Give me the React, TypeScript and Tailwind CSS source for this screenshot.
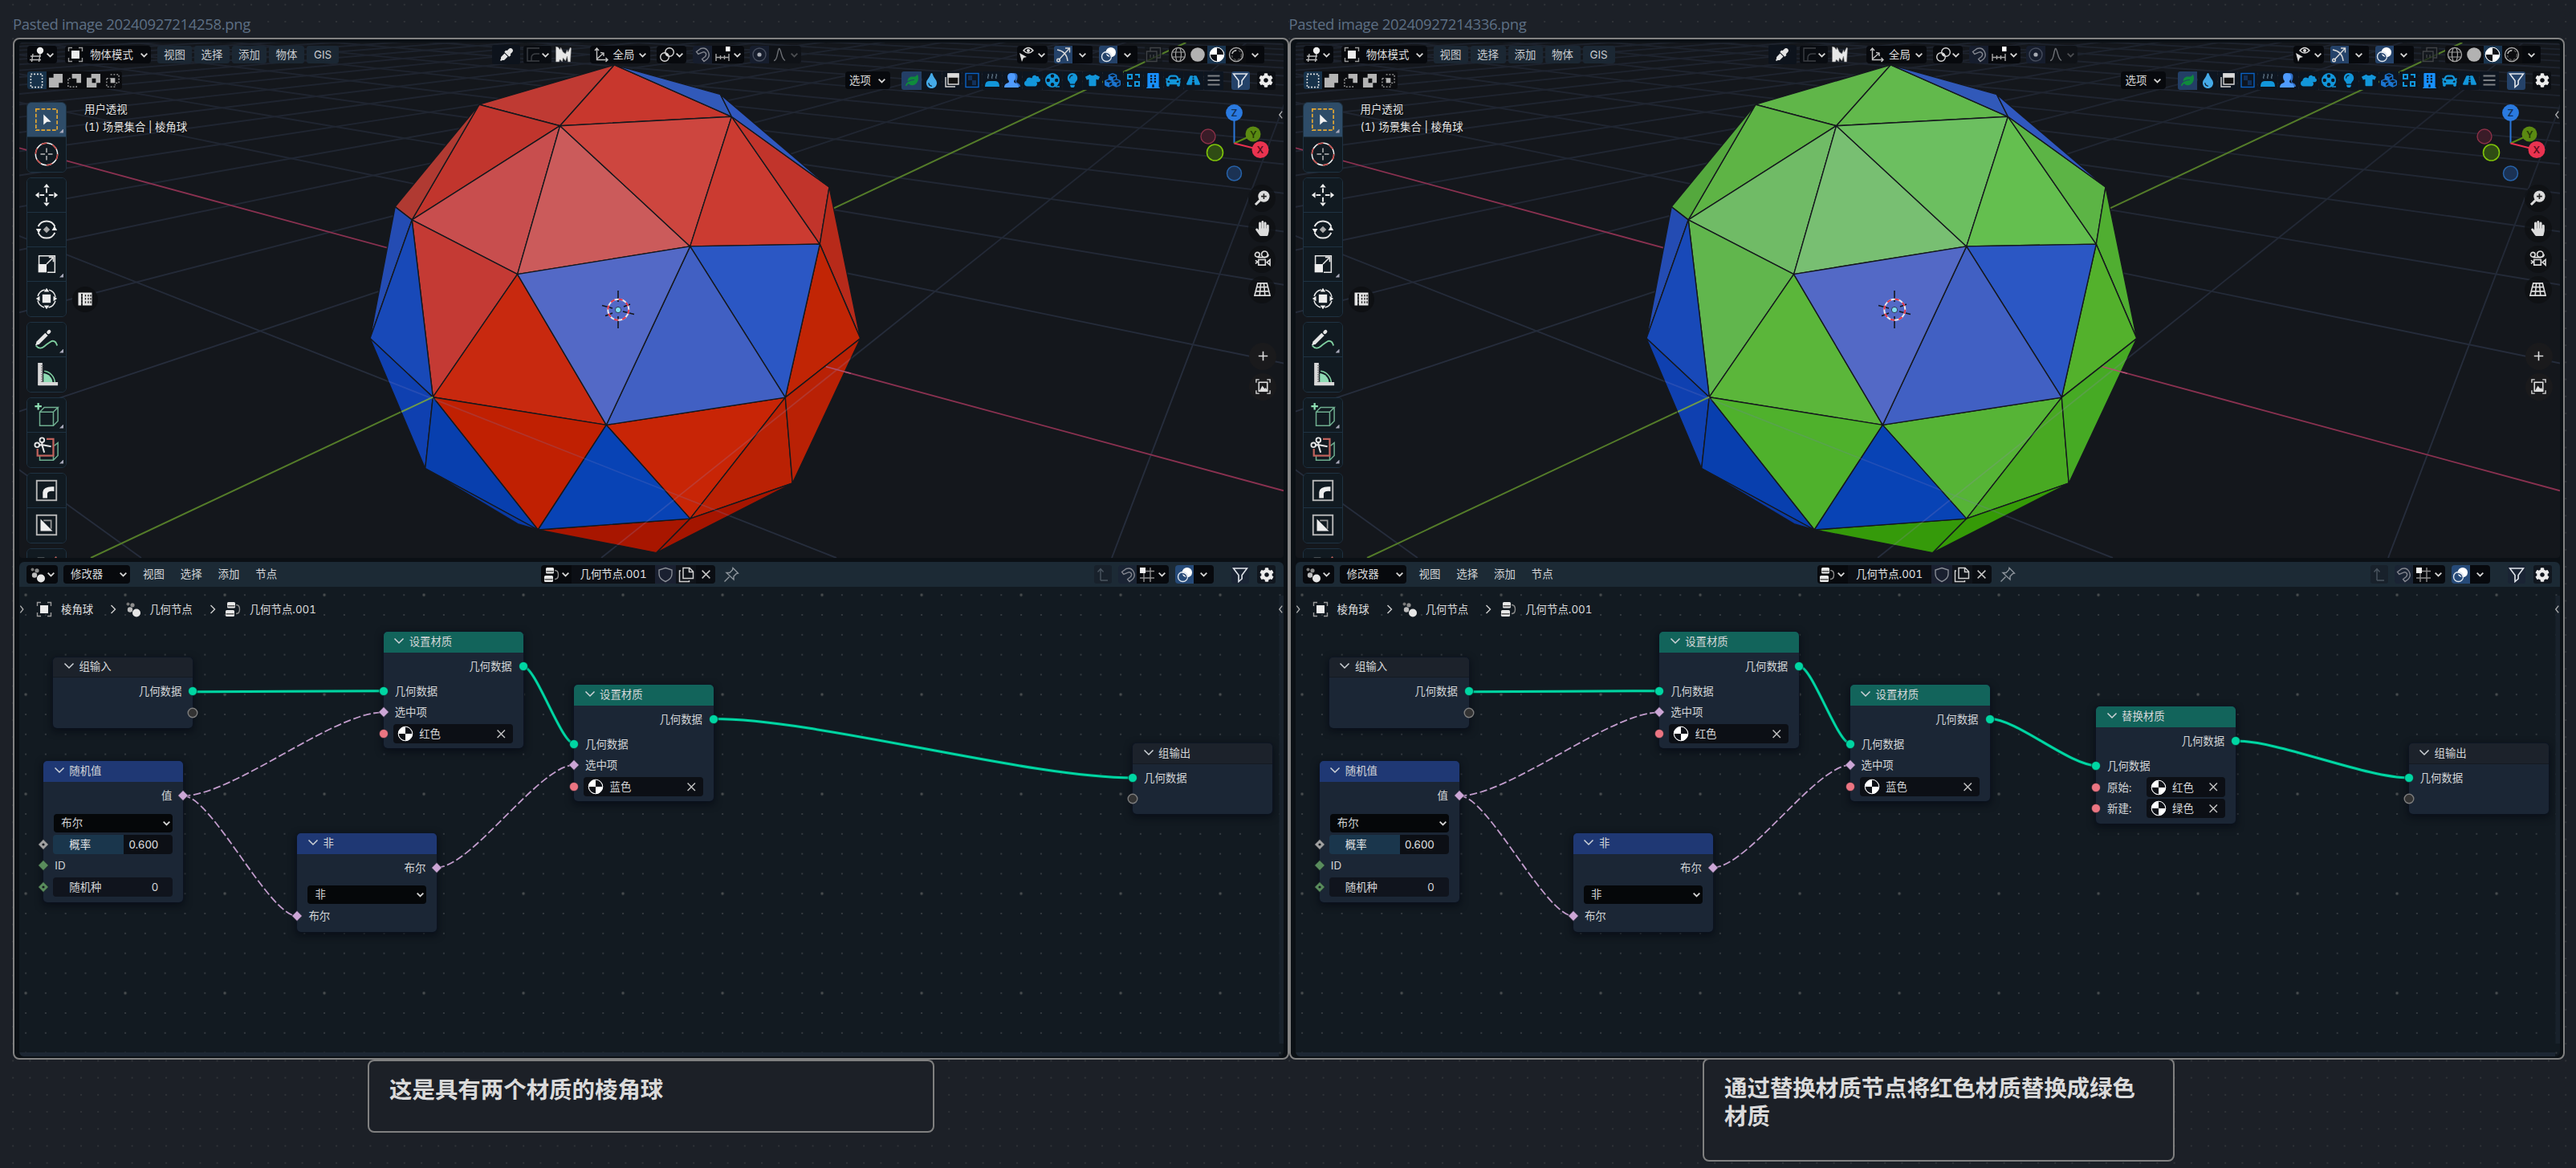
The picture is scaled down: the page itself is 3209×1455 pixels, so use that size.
import React from "react";
import {
  FaBuilding, FaCar, FaCloud, FaCog, FaCubes, FaEyeDropper, FaHandPaper, FaLeaf,
  FaLightbulb, FaRoad, FaTint, FaTshirt,
} from "react-icons/fa";

type Kids = { children?: React.ReactNode };

/* ---------- icons ---------- */

function Ic({ children, c = "size-[20px]" }: Kids & { c?: string }) {
  return (
    <svg viewBox="0 0 20 20" className={"shrink-0 " + c} fill="none" stroke="#d8d8d8" strokeWidth="1.4">
      {children}
    </svg>
  );
}

const Chev = ({ c = "w-[11px] h-[11px]" }: { c?: string }) => (
  <svg viewBox="0 0 10 10" className={"shrink-0 " + c} fill="none" stroke="#d6d6d6" strokeWidth="1.6">
    <path d="M1.500 3.200 5 6.800 8.500 3.200" />
  </svg>
);
const Dots = () => (
  <Ic>
    <g stroke="none" fill="#e6e6e6">
      <circle cx="3.500" cy="3.500" r="2" fill="#777" />
      <circle cx="9" cy="4.800" r="2.600" fill="#8d8d8d" />
      <circle cx="6" cy="10.500" r="3.200" fill="#bcbcbc" />
      <circle cx="14" cy="14.500" r="5" />
    </g>
  </Ic>
);
const ObjectIcon = () => (
  <Ic>
    <path d="M1.500 6V1.500H6M14 1.500h4.500V6M18.500 14v4.500H14M6 18.500H1.500V14" stroke="#9a9a9a" />
    <rect x="5" y="5" width="10" height="10" fill="#ececec" stroke="none" />
  </Ic>
);
const TreeIcon = () => (
  <Ic>
    <rect x="3" y="1" width="10" height="7.500" rx="1.500" fill="#e8e8e8" stroke="none" />
    <rect x="1" y="11" width="11" height="8" rx="1.500" fill="#e8e8e8" stroke="none" />
    <path d="M3.500 5.800h9M1.500 15.800h10" stroke="#555" />
    <path d="M14 4.500q4.500 0 4.500 5.500t-4.500 5.500" stroke="#8a8a8a" />
  </Ic>
);
const MagnetIcon = () => (
  <Ic>
    <path d="M2.500 6.500 8 2.500q6-2 9 3.500t-1 9.500l-4 3-2.400-3 3.900-3q2-2.500.5-4.500t-3.800-.8L4.800 9.500z" stroke="#83868f" />
  </Ic>
);
const OverlayIcon = () => (
  <Ic>
    <circle cx="12.800" cy="7.200" r="6.200" fill="#fff" stroke="none" />
    <circle cx="7.500" cy="12.500" r="6" stroke="#dfe6ee" />
    <path d="M7 8.500q5 1 5 5.500" stroke="#2b4a77" />
  </Ic>
);
const FilterIcon = () => (
  <Ic>
    <path d="M1.500 2h17l-6.400 8.500v4.500L8 18.500v-8z" stroke="#e2e6ec" strokeWidth="1.600" />
  </Ic>
);
const MatIcon = () => (
  <Ic>
    <circle cx="10" cy="10" r="8.800" fill="#fff" stroke="#fff" strokeWidth="1" />
    <path d="M10 1.800a8.200 8.200 0 0 1 8.200 8.200H10zM10 18.200V10H1.800a8.200 8.200 0 0 0 8.200 8.200z" fill="#0d1017" stroke="none" />
  </Ic>
);
const Cross = ({ c = "size-[13px]" }: { c?: string }) => (
  <svg viewBox="0 0 12 12" className={"shrink-0 " + c} stroke="#c4c4c4" strokeWidth="1.4">
    <path d="M1.500 1.500l9 9M10.500 1.500l-9 9" />
  </svg>
);

/* ---------- buttons ---------- */

const Cell = ({ c, children }: Kids & { c: string }) => (
  <div className={"flex shrink-0 items-center justify-center " + c}>{children}</div>
);
const MenuBtn = ({ c, children }: Kids & { c: string }) => (
  <Cell c={"h-[22.500px] rounded-[3px] bg-[#1b2733] text-[#c9ccd0] " + c}>{children}</Cell>
);

/* ---------- 3D scene ---------- */

const V: Record<string, [number, number]> = {
  A: [765.4, 80.8], B: [597, 130.2], C: [697.6, 156.7], D: [911.4, 145.3], E: [897.5, 117.6],
  F: [1033, 233], G: [492.2, 257.6], H: [513.2, 273.9], I: [644.6, 341.6], J: [859.7, 306.9],
  K: [1021.3, 304.1], L: [1071.8, 421.6], M: [461, 421.6], N: [539.3, 494.7], O: [755.3, 529.4],
  P: [978.3, 495.1], Q: [529.7, 583.7], R: [670.2, 660], S: [859.7, 646.1], T: [987.2, 602],
  U: [817.6, 688.6], W: [645, 652.7],
};
const SWAPPABLE: [string, string, string][] = [
  ["ABC", "#bf3a33", "#60b649"], ["ACD", "#c8372d", "#62b94c"], ["BCH", "#c1352d", "#5eb445"],
  ["BHG", "#b03a32", "#54a83d"], ["CHI", "#c84e4e", "#70bb66"], ["CIJ", "#cb5b5b", "#78bf72"],
  ["CDJ", "#cd463f", "#6cbf60"], ["DJK", "#cb3b31", "#64bf4f"], ["DFK", "#c1342b", "#5cb445"],
  ["FKL", "#b72a1a", "#50ae31"], ["KLP", "#c12505", "#53b12c"], ["HIN", "#c43a34", "#61b64d"],
  ["INO", "#c8290f", "#5bb63a"], ["NOR", "#c02002", "#4fb12c"], ["OSP", "#c82506", "#56b436"],
  ["PST", "#ba2104", "#48a922"], ["PLT", "#b92105", "#46aa24"], ["STU", "#a51500", "#359a07"],
  ["RSU", "#a81600", "#359a0a"],
];
const BLUE: [string, string][] = [
  ["AED", "#3159b9"], ["EFD", "#3058bf"], ["JKP", "#2b57c4"], ["JOP", "#4160c3"], ["IJO", "#5369c6"],
  ["GHM", "#244cb3"], ["HMN", "#1849b8"], ["MNQ", "#0f40b0"], ["NQR", "#083fae"], ["QWR", "#0a3aa4"],
  ["ORS", "#0843b5"],
];
const pts = (f: string) => f.split("").map((k) => V[k].join(",")).join(" ");
const OUTLINE = "AEFLTURWQMGB";

/* floor lines run to one of two vanishing points and cross y=695 at equal steps */
const floorA = Array.from({ length: 24 }, (_, i) => i - 1).filter((k) => k !== 1);
const floorB = Array.from({ length: 26 }, (_, i) => 2 - i).filter((k) => k !== 0);

function Scene({ green }: { green: boolean }) {
  const id = green ? "g" : "r";
  return (
    <svg viewBox="24 53 1575 642" className="absolute inset-0 h-[642px] w-[1575px]">
      <defs>
        <linearGradient id={"fade" + id} x1="0" y1="53" x2="0" y2="450" gradientUnits="userSpaceOnUse">
          <stop offset="0" stopColor="#fff" stopOpacity=".55" />
          <stop offset="1" stopColor="#fff" />
        </linearGradient>
        <mask id={"m" + id} maskUnits="userSpaceOnUse" x="24" y="53" width="1575" height="642">
          <rect x="24" y="53" width="1575" height="642" fill={`url(#fade${id})`} />
        </mask>
        <clipPath id={"ball" + id}><polygon points={pts(OUTLINE)} /></clipPath>
      </defs>
      <rect x="24" y="53" width="1575" height="642" fill="#14171c" />
      <g mask={`url(#m${id})`} stroke="#262d3c" strokeWidth="1.900">
        {floorA.map((k) => <line key={"a" + k} x1="-865" y1="-56" x2={1042 + 866 * k} y2="695" />)}
        {floorB.map((k) => <line key={"b" + k} x1="1662" y1="-34" x2={749 + 636 * (k - 1)} y2="695" />)}
      </g>
      <line x1="24" y1="184.400" x2="1599" y2="611.300" stroke="#8a3150" strokeWidth="1.800" />
      <line x1="113" y1="695" x2="1477.300" y2="53" stroke="#547c29" strokeWidth="2" />

      <g stroke="#15181d" strokeWidth="1.400" strokeLinejoin="round">
        {SWAPPABLE.map(([f, r, g]) => <polygon key={f} points={pts(f)} fill={green ? g : r} />)}
        {BLUE.map(([f, c]) => <polygon key={f} points={pts(f)} fill={c} />)}
      </g>
      <g clipPath={`url(#ball${id})`} strokeWidth="1.800" opacity=".22">
        <path d="M440 457.700 539 496.700 1042 695" stroke="#7a7ac0" />
        <path d="M749 695 1072 437" stroke="#9a86c0" />
      </g>
      <path d="M500 513 539.300 494.700" stroke="#6f9a4a" strokeWidth="2" />
      <path d="M1029 456.800 1060 465.200" stroke="#b05070" strokeWidth="1.500" />

      <path d="M770 362v14M770 394v15M750 380.500l13 3.500M776 388l14 3.500M754 393.500l9-3.500M777 382l8-3" stroke="#14171c" strokeWidth="1.600" />
      <circle cx="770.300" cy="385.800" r="13" fill="none" stroke="#e9e9f0" strokeWidth="2" />
      <circle cx="770.300" cy="385.800" r="13" fill="none" stroke="#e0344c" strokeWidth="2" strokeDasharray="5.100 5.100" />
      <circle cx="770" cy="386" r="3.600" fill="#7fdcf2" stroke="#223" strokeWidth=".8" />
    </svg>
  );
}

/* ---------- viewport headers ---------- */

function TopBar() {
  return (
    <div className="flex h-[23px] items-center text-[13.400px] text-[#dcdcdc]">
      <Cell c="ml-[10px] h-[22.500px] w-[37px] rounded-[4px] bg-[#07090d]">
        <Ic>
          <path d="M4 9 2.500 19M13 9l-1.500 10M1 12h13M0 16.500h14" stroke="#bcbcbc" />
          <circle cx="13" cy="5" r="4.200" fill="#eee" stroke="none" />
        </Ic>
        <Chev />
      </Cell>
      <Cell c="ml-[10px] h-[22.500px] w-[107px] gap-[8px] rounded-[4px] bg-[#07090d]">
        <ObjectIcon />
        <span>物体模式</span>
        <Chev />
      </Cell>
      <MenuBtn c="ml-[8px] w-[43px]">视图</MenuBtn>
      <MenuBtn c="ml-[3px] w-[44px]">选择</MenuBtn>
      <MenuBtn c="ml-[3px] w-[43px]">添加</MenuBtn>
      <MenuBtn c="ml-[3px] w-[44px]">物体</MenuBtn>
      <MenuBtn c="ml-[3px] w-[40px]">GIS</MenuBtn>

      <Cell c="ml-[191px] h-[24px] w-[35px] rounded-[3px] bg-[#0d131c]"><FaEyeDropper className="size-[16px] text-[#e4e4e4]" /></Cell>
      <Cell c="ml-[4px] h-[22.500px] w-[35px] rounded-[3px] bg-[#090c11]">
        <Ic><path d="M18 2H3v16h15M8 18v-4q0-5 6-5h4" stroke="#3c3f44" /></Ic>
        <Chev />
      </Cell>
      <Cell c="ml-[3px] h-[21px] w-[23px]">
        <Ic c="h-[20px] w-[21px]"><path d="M1 0 4 1l2 3 1-3 3 6 3 2 2-5 1 3 3-6 1 1-1 17h-3l-1-7-2 6-3-4-1 5-3-3-1 3H1z" fill="#e8e8e8" stroke="#888" strokeWidth=".6" /></Ic>
      </Cell>
      <Cell c="ml-[22px] h-[22.500px] w-[75px] gap-[5px] rounded-[4px] bg-[#07090d]">
        <Ic><path d="M4.500 2v14.500H18M4.500 15.500l8-7M2 5l2.500-3L7 5M15.500 14l2.500 2.500-2.500 2.500M9 7.500l4 .5v4" stroke="#c4c4c4" /></Ic>
        <span>全局</span>
        <Chev />
      </Cell>
      <Cell c="ml-[8px] h-[22.500px] w-[37px] rounded-[4px] bg-[#07090d]">
        <Ic>
          <circle cx="7" cy="13" r="5.300" /><circle cx="13" cy="7" r="5.300" /><circle cx="10" cy="10" r="1.500" fill="#ddd" stroke="none" />
        </Ic>
        <Chev />
      </Cell>
      <Cell c="ml-[8px] h-[22.500px] w-[24px] rounded-l-[4px] bg-[#161d2d]"><MagnetIcon /></Cell>
      <Cell c="h-[22.500px] w-[40px] gap-[3px] rounded-r-[4px] bg-[#07090d]">
        <Ic><path d="M2 9v9M7.500 11v5M12.500 11v5M18 9v9M2 13.500h16" stroke="#a8a8a8" /><rect x="14" y="0" width="5.500" height="6" fill="#fff" stroke="none" /></Ic>
        <Chev />
      </Cell>
      <Cell c="ml-[7px] h-[22.500px] w-[24px] rounded-l-[4px] bg-[#161d2d]">
        <Ic><circle cx="10" cy="10" r="8" stroke="#454c5c" /><circle cx="10" cy="10" r="2.600" fill="#a8acb4" stroke="none" /></Ic>
      </Cell>
      <Cell c="h-[22.500px] w-[40px] gap-[3px] rounded-r-[4px] bg-[#0f1217]">
        <Ic><path d="M3 17.500q3 0 4.500-8T10 2.500t2.500 7 4.500 8" stroke="#6a6d72" /></Ic>
        <span className="opacity-30"><Chev /></span>
      </Cell>

      <Cell c="ml-[269px] h-[22.500px] w-[38px] gap-[3px] rounded-[4px] bg-[#07090d]">
        <Ic>
          <path d="M6 5q6-7 12 0-6 6-12 0z" /><circle cx="12" cy="5" r="2" fill="#ddd" stroke="none" />
          <path d="M1 8l9 5-4 1-2 5z" fill="#ddd" stroke="none" />
        </Ic>
        <Chev />
      </Cell>
      <Cell c="ml-[8px] h-[22.500px] w-[23px] rounded-l-[3px] bg-[#244269]">
        <Ic><path d="M2 4q12 2 13 14M4 16.500 17 2.500M12 2h5.500v5.500" /><circle cx="3.500" cy="17" r="1.800" /></Ic>
      </Cell>
      <Cell c="h-[22.500px] w-[25px] rounded-r-[3px] bg-[#07090d]"><Chev /></Cell>
      <Cell c="ml-[8px] h-[22.500px] w-[23px] rounded-l-[3px] bg-[#244269]"><OverlayIcon /></Cell>
      <Cell c="h-[22.500px] w-[25px] rounded-r-[3px] bg-[#07090d]"><Chev /></Cell>
      <Cell c="ml-[9px] h-[22.500px] w-[22px] rounded-[3px] bg-[#11151a]/70">
        <Ic><path d="M6 6V1.500h12.500V14H14M1.500 6H14v12.500H1.500zM6 10v4M10 10v4" stroke="#3f4246" /></Ic>
      </Cell>
      <Cell c="ml-[8px] h-[22.500px] w-[24px] rounded-l-[3px] bg-[#0b0c0f]">
        <Ic><circle cx="10" cy="10" r="8.500" stroke="#a0a0a0" /><path d="M2 7h16M2 13h16M8 2q-3 8 0 16M12 2q3 8 0 16" stroke="#a0a0a0" strokeWidth="1.200" /></Ic>
      </Cell>
      <Cell c="h-[22.500px] w-[24px] bg-[#0b0c0f]"><Ic><circle cx="10" cy="10" r="8.800" fill="#b2b2b2" stroke="none" /></Ic></Cell>
      <Cell c="h-[22.500px] w-[23px] bg-[#193550]"><MatIcon /></Cell>
      <Cell c="h-[22.500px] w-[25px] bg-[#0b0c0f]">
        <Ic><circle cx="10" cy="10" r="8.500" stroke="#a8a8a8" /><circle cx="10.500" cy="10.500" r="6" stroke="#555" strokeDasharray="3 2" /><path d="M5 9q1-4 5-4" stroke="#bbb" /></Ic>
      </Cell>
      <Cell c="h-[22.500px] w-[23px] rounded-r-[3px] bg-[#07090d]"><Chev /></Cell>
    </div>
  );
}

const Tool5 = ({ children, on }: Kids & { on?: boolean }) => (
  <Cell c={"h-[22px] w-[23.600px] " + (on ? "bg-[#17324a]" : "bg-[#0b0c0f]")}><Ic c="size-[19px]">{children}</Ic></Cell>
);

const AddonCell = ({ children, on }: Kids & { on?: boolean }) => (
  <Cell c={"mr-px h-[23px] w-[24.100px] " + (on ? "bg-[#233f66]" : "bg-[#0d1520]")}>{children}</Cell>
);

function SecondBar() {
  return (
    <div className="mt-[9px] flex h-[23px] items-center text-[13.400px] text-[#dcdcdc]">
      <div className="ml-[10px] flex overflow-hidden rounded-[3px]">
        <Tool5 on><rect x="2.500" y="1.500" width="15" height="17" strokeDasharray="2 2" stroke="#e8e8e8" strokeWidth="1.700" /></Tool5>
        <Tool5><path d="M7 1h12v12h-5v6H1V6h6z" fill="#b4b4b4" stroke="none" /></Tool5>
        <Tool5><path d="M7 1h12v12h-6V7H7z" fill="#b4b4b4" stroke="none" /><path d="M5 7H2v11h11v-3" strokeDasharray="2 2" stroke="#b4b4b4" /></Tool5>
        <Tool5><path d="M7 1h12v12h-5v6H1V6h6zM8 7v6h5V7z" fill="#b4b4b4" fillRule="evenodd" stroke="none" /></Tool5>
        <Tool5><path d="M7 2h11v11h-5M2 7h5M2 7v11h11v-3" strokeDasharray="2 2" stroke="#a4a4a4" /><rect x="7" y="6.500" width="6" height="6.500" fill="#b4b4b4" stroke="none" /></Tool5>
      </div>
      <Cell c="ml-[901px] h-[22.500px] w-[56px] gap-[8px] rounded-[4px] bg-[#07090d]"><span>选项</span><Chev /></Cell>
      <div className="ml-[14.500px] flex overflow-hidden rounded-[3px]">
        <AddonCell on><FaLeaf className="size-[16px] text-[#0f8a3c]" /></AddonCell>
        <AddonCell><FaTint className="h-[19px] w-[17px] text-[#45aae8]" /></AddonCell>
        <AddonCell><Ic><path d="M5 2h13v13H5z" fill="#111" /><path d="M5 2h13v4H5z" fill="#ddd" /><path d="M2 6v12h12" /></Ic></AddonCell>
        <AddonCell><Ic><rect x="2" y="1.500" width="16" height="17" stroke="#0b62c4" /><path d="M5 4h5v6h5v6h-5v-6H5z" fill="#12305a" stroke="none" /></Ic></AddonCell>
        <AddonCell><Ic><path d="M1 18q0-7 5-7h8q5 0 5 7z" fill="#1296db" stroke="none" /><path d="M5 8q-1-2 0-3t0-3M10 8q-1-2 0-3t0-3M15 8q-1-2 0-3t0-3" stroke="#5b6f80" /></Ic></AddonCell>
        <AddonCell>
          <Ic>
            <path d="M11 1q6-.5 5.500 5 0 3-1.500 5 0 2 2 2.500 3 1 3 4.500h-4z" fill="#2f6fc8" stroke="none" />
            <path d="M9 1q5 0 5 5 0 3-2 5 0 2 2 2.500 4 1 4 5.500H0q0-4.500 4-5.500 2-.5 2-2.500-2-2-2-5 0-5 5-5z" fill="#4f9bff" stroke="none" />
          </Ic>
        </AddonCell>
        <AddonCell>
          <span className="relative flex h-[20px] w-[20px] items-end">
            <FaCloud className="size-[16px] text-[#1296db]" />
            <FaCloud className="absolute top-[2px] right-0 size-[12px] text-[#1296db]" />
          </span>
        </AddonCell>
        <AddonCell>
          <Ic>
            <circle cx="10" cy="10" r="9" fill="#1296db" stroke="none" />
            <g fill="#0d1520" stroke="none">
              <circle cx="10" cy="4.800" r="2.200" /><circle cx="10" cy="15.200" r="2.200" /><circle cx="4.800" cy="10" r="2.200" /><circle cx="15.200" cy="10" r="2.200" />
            </g>
            <path d="M14 18h5" stroke="#1296db" />
          </Ic>
        </AddonCell>
        <AddonCell><FaLightbulb className="size-[18px] text-[#1296db]" /></AddonCell>
        <AddonCell><FaTshirt className="size-[18px] text-[#1296db]" /></AddonCell>
        <AddonCell><FaCubes className="size-[20px] text-[#1a74cf]" /></AddonCell>
        <AddonCell><Ic><path d="M3 3h5v5H3zM12 12h5v5h-5zM12 3h5v4M3 12v5h5" stroke="#1296db" strokeWidth="2" /></Ic></AddonCell>
        <AddonCell><FaBuilding className="size-[19px] text-[#1890ff]" /></AddonCell>
        <AddonCell><FaCar className="size-[19px] text-[#1296db]" /></AddonCell>
        <AddonCell><FaRoad className="h-[16px] w-[17px] text-[#1296db]" /></AddonCell>
        <AddonCell><Ic><path d="M2.500 4.500h15M2.500 10h15M2.500 15.500h15" stroke="#7d8084" strokeWidth="1.800" /></Ic></AddonCell>
      </div>
      <Cell c="ml-[9px] h-[23px] w-[23px] rounded-[3px] bg-[#244269]"><FilterIcon /></Cell>
      <Cell c="ml-[9px] h-[23px] w-[23px] rounded-[3px] bg-[#0b0e13]"><FaCog className="size-[18px] text-[#ececec]" /></Cell>
    </div>
  );
}

/* ---------- viewport tool shelf ---------- */

const Tool = ({ children, on, tri, last }: Kids & { on?: boolean; tri?: boolean; last?: boolean }) => (
  <div className={"relative flex h-[43px] items-center justify-center " + (on ? "bg-[#2e4c68] " : "bg-[#111a21] ") + (last ? "" : "border-b border-[#1e3242]")}>
    <svg viewBox="0 0 34 34" className="size-[32px]" fill="none" stroke="#e6e6e6" strokeWidth="1.600">{children}</svg>
    {tri && <div className="absolute right-[3px] bottom-[4px] size-[5px] bg-[#aab] [clip-path:polygon(100%_0,100%_100%,0_100%)]" />}
  </div>
);
const Group = ({ children }: Kids) => (
  <div className="mb-[6px] shrink-0 overflow-hidden rounded-[6px] border border-[#1e3242]">{children}</div>
);

function Shelf() {
  return (
    <div className="ml-[9px] flex w-[50px] flex-col">
      <Group>
        <Tool on tri>
          <rect x="3" y="3" width="28" height="28" stroke="#e5a832" strokeWidth="1.800" strokeDasharray="5 2.200" />
          <path d="M13 10l10 10h-5.500L13 24z" fill="#f2f2f2" stroke="none" />
        </Tool>
        <Tool last>
          <circle cx="17" cy="17" r="14.500" stroke="#f0f0f0" />
          <circle cx="17" cy="17" r="14.500" stroke="#c2403e" strokeDasharray="7.600 7.600" />
          <path d="M17 9v6M17 19v6M9 17h6M19 17h6" stroke="#b8b8b8" />
        </Tool>
      </Group>
      <Group>
        <Tool>
          <path d="M17 8v6M17 20v6M8 17h6M20 17h6" strokeWidth="2.200" />
          <path d="M17 2l4 5h-8zM17 32l4-5h-8zM2 17l5-4v8zM32 17l-5-4v8z" fill="#eee" stroke="none" />
        </Tool>
        <Tool>
          <path d="M6 13a12 12 0 0 1 22 0M28 21a12 12 0 0 1-22 0" strokeWidth="2" />
          <path d="M3 16h7l-3.500 6zM24 18h7l-3.500-6z" fill="#eee" stroke="none" />
          <path d="M17 12.500l4.500 4.500-4.500 4.500-4.500-4.500z" fill="#aaa" stroke="none" />
        </Tool>
        <Tool tri>
          <path d="M7 17V6h21v22H18M17 17l8-8M20 8h6v6" />
          <rect x="6" y="17" width="11" height="11" fill="#eee" stroke="none" />
        </Tool>
        <Tool last>
          <circle cx="17" cy="17" r="12" strokeDasharray="13 5.850" strokeDashoffset="-3" />
          <rect x="11.500" y="11.500" width="11" height="11" fill="#eee" stroke="none" />
          <path d="M17 3l3.500 5h-7zM17 31l3.500-5h-7zM3 17l5-3.500v7zM31 17l-5-3.500v7z" fill="#eee" stroke="none" />
        </Tool>
      </Group>
      <Group>
        <Tool tri>
          <path d="M3 25q5 6 11 1t10-7q5-1 7 6" stroke="#7fcfa0" strokeWidth="2" />
          <path d="M5 22 17 10" strokeWidth="5" /><path d="M19.500 7.500l1-1" strokeWidth="4.500" strokeLinecap="round" />
          <path d="M2 25l2-5 3 3z" fill="#eee" stroke="none" />
        </Tool>
        <Tool last>
          <path d="M13 29V16a13 13 0 0 1 12 13z" fill="#8fdcb4" stroke="none" />
          <path d="M14 13a16 16 0 0 1 14 15" stroke="#7fcfa0" />
          <path d="M8.500 2v30" strokeWidth="6" stroke="#d8d8d8" /><path d="M6 30h26" strokeWidth="4.500" stroke="#d8d8d8" />
          <path d="M11 5v23" strokeWidth="2.500" stroke="#777" strokeDasharray="1.500 1.500" />
        </Tool>
      </Group>
      <Group>
        <Tool tri>
          <path d="M8 13h18v18H8zM8 13l6-6h18l-6 6M32 7v18l-6 6" stroke="#6fae90" />
          <path d="M6 1v9M1.500 5.500h9" stroke="#8fe0b4" strokeWidth="2.400" />
        </Tool>
        <Tool tri last>
          <path d="M8 25v6h18v-6M26 31l6-6V8l-5 4" stroke="#6fae90" />
          <path d="M17 3h9v22H5v-9" stroke="#c0625c" strokeWidth="2.400" />
          <circle cx="11" cy="4.500" r="3" strokeWidth="2" /><circle cx="4.500" cy="11" r="3" strokeWidth="2" />
          <path d="M11 7v4l3 10M7 11h5l11 2" strokeWidth="2.200" />
        </Tool>
      </Group>
      <Group>
        <Tool>
          <rect x="4" y="4" width="26" height="26" stroke="#b8b8b8" strokeWidth="2" />
          <path d="M12 27v-8q1-8 15-7v6q-8-1-9 3v6z" fill="#eee" stroke="none" />
        </Tool>
        <Tool last>
          <rect x="4" y="4" width="26" height="26" stroke="#b8b8b8" strokeWidth="2" />
          <path d="M9 9l16 16H9z" fill="#eee" stroke="none" /><path d="M13 11h10v11" stroke="#999" strokeWidth="1.800" />
        </Tool>
      </Group>
      <Group>
        <Tool><path d="M5 6h9l4 4v10H5z" fill="#eee" stroke="none" /><path d="M24 12l6-7" stroke="#c0625c" strokeWidth="2" /></Tool>
      </Group>
    </div>
  );
}

/* ---------- viewport right side ---------- */

const NavBtn = ({ children, c = "bg-[#0e1013]/80" }: Kids & { c?: string }) => (
  <div className={"flex size-[34px] items-center justify-center rounded-full " + c}>
    <svg viewBox="0 0 22 22" className="size-[21px]" fill="none" stroke="#dcdcdc" strokeWidth="1.700">{children}</svg>
  </div>
);

function RightSide() {
  return (
    <div className="ml-auto flex flex-col">
      <div className="flex">
        <svg viewBox="1491 127.500 95 102" className="h-[102px] w-[95px]" fontFamily="Inter" fontSize="12" fontWeight="600" textAnchor="middle">
          <path d="M1537.500 179V148" stroke="#2a76d8" strokeWidth="2" />
          <path d="M1537.500 179l20-9" stroke="#5b8a12" strokeWidth="2" />
          <path d="M1537.500 179l28 7" stroke="#e8304f" strokeWidth="2" />
          <circle cx="1505" cy="170.500" r="9" fill="#3a1c28" stroke="#8b3047" strokeWidth="1.400" />
          <circle cx="1513.500" cy="190.500" r="10" fill="#2f4c14" stroke="#7fc20a" strokeWidth="1.600" />
          <circle cx="1537.500" cy="216.500" r="9" fill="#1b3254" stroke="#2762a8" strokeWidth="1.500" />
          <circle cx="1537.500" cy="141" r="10.400" fill="#2a7ae0" />
          <circle cx="1561" cy="167.500" r="9.500" fill="#5b8a12" />
          <circle cx="1570" cy="187" r="10.500" fill="#ea3350" />
          <text x="1537.500" y="145.500" fill="#10305a">Z</text>
          <text x="1561.300" y="172" fill="#243a06">Y</text>
          <text x="1569.800" y="191.500" fill="#5d0d1b">X</text>
        </svg>
        <svg viewBox="0 0 8 12" className="mt-[10px] ml-[6px] h-[12px] w-[7px]" fill="none" stroke="#b0b0b0" strokeWidth="1.500"><path d="M6 1 2 6l4 5" /></svg>
      </div>
      <div className="mt-[1px] ml-[64px] flex flex-col gap-[4px]">
        <NavBtn>
          <circle cx="13" cy="9" r="7.500" fill="#dcdcdc" stroke="none" /><path d="M8 14l-6 6" strokeWidth="3" /><path d="M13 5.500v7M9.500 9h7" stroke="#222" />
        </NavBtn>
        <div className="flex size-[34px] items-center justify-center rounded-full bg-[#0e1013]/80"><FaHandPaper className="size-[19px] text-[#dcdcdc]" /></div>
        <NavBtn>
          <circle cx="4.500" cy="5.500" r="3" /><circle cx="14" cy="5" r="4" /><path d="M5 9h9q5 0 5-4M6 12h9v7H6zM2 13l3 2-3 2M21 12v7l-4-3.500z" />
        </NavBtn>
        <NavBtn><path d="M5 3h12l4 16H1zM9 3 7.500 19M13 3l1.500 16M4 8h14M2.500 13.500h17" /></NavBtn>
      </div>
      <div className="mt-[49px] ml-[65px] flex flex-col gap-[4px]">
        <NavBtn c="bg-[#1a1a1c]"><path d="M11 5v12M5 11h12" /></NavBtn>
        <NavBtn c="bg-[#1a1a1c]">
          <path d="M2 6V2h4M16 2h4v4M20 16v4h-4M6 20H2v-4" strokeWidth="1.400" /><rect x="5.500" y="5.500" width="11" height="11.500" /><path d="M6 17l4-7 3 4 1.500-1.500L17 17z" fill="#ddd" stroke="none" />
        </NavBtn>
      </div>
    </div>
  );
}

function Viewport({ green }: { green: boolean }) {
  return (
    <div className="relative h-[642px] w-[1575px] overflow-hidden rounded-[4px]">
      <Scene green={green} />
      <div className="relative flex flex-col pt-[3.500px]">
        <TopBar />
        <SecondBar />
        <div className="mt-[15px] flex">
          <Shelf />
          <div className="flex flex-col pl-[7px]">
            <div className="h-[230px] pl-[15px] text-[13.400px] leading-[22.700px] text-[#e4e4e4] tabular-nums [text-shadow:0_1px_2px_#000]">
              <div className="-mt-[2px]">用户透视</div>
              <div>(1) 场景集合 | 棱角球</div>
            </div>
            <div className="flex size-[32px] items-center justify-center rounded-full bg-[#0e1013]">
              <Ic><rect x="1.500" y="1.500" width="17" height="16" fill="#e4e4e4" stroke="none" /><path d="M6 3v15M10.500 4v12M14 4v12M17 4v12" stroke="#222" strokeDasharray="2.500 1.600" /><path d="M6 3v16h4" stroke="#0e1013" /></Ic>
            </div>
          </div>
          <RightSide />
        </div>
      </div>
    </div>
  );
}

/* ---------- node editor ---------- */

type SockKind = "geo" | "bool" | "mat" | "virt" | "float" | "int" | "intv";
function Socket({ kind, side }: { kind: SockKind; side: "l" | "r" }) {
  const pos = side === "l" ? "left-[-7px]" : "right-[-7px]";
  const round = kind === "geo" || kind === "mat" || kind === "virt";
  const fill = { geo: "#00d6a3", bool: "#cca6d6", mat: "#eb7582", virt: "#333333", float: "#a1a1a1", int: "#598c5c", intv: "#598c5c" }[kind];
  return (
    <svg viewBox="0 0 14 14" className={"absolute top-1/2 size-[14px] -translate-y-1/2 " + pos}>
      {round ? (
        <circle cx="7" cy="7" r={kind === "virt" ? 5.8 : 5.5} fill={fill} stroke={kind === "virt" ? "#7d7d7d" : "#111820"} strokeWidth={kind === "virt" ? 1.4 : 0.6} />
      ) : (
        <path d="M7 .6 13.400 7 7 13.400.6 7z" fill={fill} stroke="#111820" strokeWidth=".6" />
      )}
      {(kind === "float" || kind === "intv") && <circle cx="7" cy="7" r="1.600" fill="#151b22" />}
    </svg>
  );
}

const Out = ({ label, kind = "geo" }: { label?: string; kind?: SockKind }) => (
  <div className="relative flex h-[26.600px] shrink-0 items-center justify-end pr-[14px]">{label}<Socket kind={kind} side="r" /></div>
);
const In = ({ label, kind, children }: Kids & { label?: string; kind?: SockKind }) => (
  <div className="relative flex h-[26.700px] shrink-0 items-center pr-[13px] pl-[14px]">
    {label}{children}{kind && <Socket kind={kind} side="l" />}
  </div>
);
const Select = ({ label }: { label: string }) => (
  <div className="-ml-[1px] flex h-[23px] flex-1 items-center justify-between rounded-[4px] bg-[#050709] pr-[2px] pl-[9px]">{label}<Chev /></div>
);
const MatField = ({ label, c = "-ml-[2px] flex-1" }: { label: string; c?: string }) => (
  <div className={"flex h-[24.500px] items-center rounded-[4px] bg-[#0c0f15] pl-[5px] " + c}>
    <MatIcon /><span className="ml-[7.500px] flex-1">{label}</span><Cross c="mr-[8.500px] size-[12.500px]" />
  </div>
);

function Node({ x, y, h, title, tone, children }: Kids & { x: number; y: number; h: number; title: string; tone: "geo" | "conv" | "io" }) {
  const head = { geo: "bg-[#12645b]", conv: "bg-[#1f3874]", io: "bg-[#1c222b] border-b border-[#141a22]" }[tone];
  return (
    <div className="absolute flex w-[174px] flex-col rounded-[5px] bg-[#1b2635] shadow-[0_3px_9px_2px_rgba(4,8,16,0.55),0_0_0_1px_#111a28]" style={{ left: x - 24, top: y - 731, height: h }}>
      <div className={"mb-[3.500px] flex h-[25.800px] shrink-0 items-center rounded-t-[5px] pb-[1.500px] pl-[12.500px] " + head}>
        <svg viewBox="0 0 14 14" className="size-[14px]" fill="none" stroke="#d0d4d8" strokeWidth="1.500"><path d="M1.500 3.500 7 9 12.500 3.500" /></svg>
        <span className="ml-[5.500px]">{title}</span>
      </div>
      {children}
    </div>
  );
}

const link = (x1: number, y1: number, x2: number, y2: number) => {
  const h = (x2 - x1) * 0.25;
  return `M${x1} ${y1}C${x1 + h} ${y1} ${x2 - h} ${y2} ${x2} ${y2}`;
};

function Canvas({ green }: { green: boolean }) {
  const id = green ? "pg" : "pr";
  const geo = [
    link(240.4, 861.8, 477.7, 860.7),
    link(651.5, 830, 715, 926.3),
    ...(green
      ? [link(889, 895.6, 1021.6, 953.7), link(1195.6, 923, 1411, 969)]
      : [link(889, 895.6, 1411, 969)]),
  ];
  const bool = [link(228, 991.3, 477.7, 887.3), link(228, 991.3, 370.4, 1141.3), link(544.5, 1080.5, 715, 953)];
  return (
    <div className="relative h-[585px] overflow-hidden bg-[#121a21]">
      <svg viewBox="24 731 1575 585" className="absolute inset-0 h-[585px] w-[1575px]">
        <defs>
          <pattern id={id} x="31.100" y="740.200" width="24.800" height="24.800" patternUnits="userSpaceOnUse">
            <circle cx="1" cy="1" r="1" fill="#3e4449" />
          </pattern>
          <pattern id={id + "M"} x="30.300" y="739.400" width="124" height="124" patternUnits="userSpaceOnUse">
            <circle cx="1.800" cy="1.800" r="1.700" fill="#4a4e50" />
          </pattern>
        </defs>
        <rect x="24" y="731" width="1575" height="585" fill={`url(#${id})`} />
        <rect x="24" y="731" width="1575" height="585" fill={`url(#${id}M)`} />
        <rect x="24" y="1311" width="1569" height="5" fill="#1d2733" />
        <rect x="1593.500" y="742" width="5.500" height="558" fill="#19222c" />
        <g fill="none">
          {geo.map((d) => <path key={d} d={d} stroke="#0c2a2a" strokeWidth="5" />)}
          {geo.map((d) => <path key={d + "f"} d={d} stroke="#00d6a3" strokeWidth="3" />)}
          {bool.map((d) => <path key={d} d={d} stroke="#c29ccc" strokeWidth="1.800" strokeDasharray="9.500 3.500" />)}
        </g>
      </svg>

      <div className="relative flex h-[56px] items-center text-[13.400px] text-[#dcdcdc] tabular-nums">
        <svg viewBox="0 0 8 12" className="h-[12px] w-[7px]" fill="none" stroke="#b0b0b0" strokeWidth="1.500"><path d="M1.500 1l4 5-4 5" /></svg>
        <span className="ml-[14px] flex"><ObjectIcon /></span><span className="ml-[11px]">棱角球</span>
        <svg viewBox="0 0 8 12" className="ml-[21px] h-[12px] w-[8px]" fill="none" stroke="#d0d0d0" strokeWidth="1.400"><path d="M1.500 1l5 5-5 5" /></svg>
        <span className="ml-[11px] flex"><Dots /></span><span className="ml-[10px]">几何节点</span>
        <svg viewBox="0 0 8 12" className="ml-[21px] h-[12px] w-[8px]" fill="none" stroke="#d0d0d0" strokeWidth="1.400"><path d="M1.500 1l5 5-5 5" /></svg>
        <span className="ml-[11px] flex"><TreeIcon /></span><span className="ml-[11px]">几何节点.001</span>
        <svg viewBox="0 0 8 12" className="ml-auto h-[12px] w-[7px]" fill="none" stroke="#b0b0b0" strokeWidth="1.500"><path d="M6 1 2 6l4 5" /></svg>
      </div>

      <div className="text-[13.400px] leading-[20px] text-[#d4d6d8]">
        <Node x={66.4} y={818.7} h={88.3} title="组输入" tone="io"><Out label="几何数据" /><Out kind="virt" /></Node>
        <Node x={54.3} y={948.3} h={175.5} title="随机值" tone="conv">
          <Out label="值" kind="bool" />
          <div className="h-[7.500px]" />
          <In><Select label="布尔" /></In>
          <In kind="float">
            <div className="-ml-[2px] flex h-[24px] flex-1 items-center justify-between rounded-[4px] bg-[linear-gradient(90deg,#1a364c_59%,#0c0f15_59%)] pr-[18px] pl-[20px] text-[#e0e2e4]"><span>概率</span><span>0.600</span></div>
          </In>
          <In kind="int" label="ID" />
          <In kind="intv"><div className="-ml-[2px] flex h-[24px] flex-1 items-center justify-between rounded-[4px] bg-[#10141d] pr-[18px] pl-[20px]"><span>随机种</span><span>0</span></div></In>
        </Node>
        <Node x={370.4} y={1038} h={123.3} title="非" tone="conv">
          <Out label="布尔" kind="bool" />
          <div className="h-[7px]" />
          <In><Select label="非" /></In>
          <In kind="bool" label="布尔" />
        </Node>
        <Node x={477.7} y={787} h={145.3} title="设置材质" tone="geo">
          <Out label="几何数据" />
          <div className="h-[4.300px]" />
          <In kind="geo" label="几何数据" /><In kind="bool" label="选中项" /><In kind="mat"><MatField label="红色" /></In>
        </Node>
        <Node x={715} y={853} h={145.3} title="设置材质" tone="geo">
          <Out label="几何数据" />
          <div className="h-[4.300px]" />
          <In kind="geo" label="几何数据" /><In kind="bool" label="选中项" /><In kind="mat"><MatField label="蓝色" /></In>
        </Node>
        {green && (
          <Node x={1021.6} y={880.3} h={145.3} title="替换材质" tone="geo">
            <Out label="几何数据" />
            <div className="h-[4.300px]" />
            <In kind="geo" label="几何数据" />
            <In kind="mat" label="原始:"><MatField label="红色" c="ml-auto w-[98.500px]" /></In>
            <In kind="mat" label="新建:"><MatField label="绿色" c="ml-auto w-[98.500px]" /></In>
          </Node>
        )}
        <Node x={1411} y={926} h={88} title="组输出" tone="io"><In kind="geo" label="几何数据" /><In kind="virt" /></Node>
      </div>
    </div>
  );
}

function NodeBar() {
  return (
    <div className="flex h-[31px] items-center bg-[#1c2a35] text-[13.400px] text-[#d4d6d8] tabular-nums">
      <Cell c="ml-[9px] h-[23px] w-[39px] gap-[1px] rounded-[4px] bg-[#07090d]"><Dots /><Chev /></Cell>
      <div className="ml-[7px] flex h-[23px] w-[83px] items-center justify-between rounded-[4px] bg-[#07090d] pr-[3px] pl-[9px]"><span>修改器</span><Chev /></div>
      <span className="ml-[16px]">视图</span><span className="ml-[20px]">选择</span><span className="ml-[20px]">添加</span><span className="ml-[20px]">节点</span>
      <Cell c="ml-[329px] h-[23px] w-[38px] gap-[2px] rounded-l-[4px] bg-[#07090d]"><TreeIcon /><Chev /></Cell>
      <Cell c="h-[23px] w-[104px] bg-[#0c0f15] text-[#e0e2e4]">几何节点.001</Cell>
      <Cell c="h-[23px] w-[26px] bg-[#1a2030]"><Ic><path d="M10 1.500 18 4v5q0 6-8 9.500Q2 15 2 9V4z" stroke="#888c94" /></Ic></Cell>
      <Cell c="h-[23px] w-[25px] bg-[#0f1319]"><Ic><path d="M6 1.500h8l4.500 4.500v8.500H6zM13.500 1.500V6.500h5M3 5H1.500v13.500h12V17" stroke="#cfcfcf" strokeWidth="1.500" /></Ic></Cell>
      <Cell c="h-[23px] w-[24px] rounded-r-[4px] bg-[#0a0d12]"><Cross /></Cell>
      <span className="ml-[10px] flex"><Ic><path d="M12 1.500l6.500 6.500-2 .5-3.500 3.500v4l-9-8.500h4L11.500 4zM7.500 12.500 1.500 18.500" stroke="#8d949b" /></Ic></span>
      <Cell c="ml-[442px] h-[23px] w-[22px] rounded-[3px] bg-[#18212b]"><Ic><path d="M7 17V3M3.500 6.500 7 2.500l3.500 4M7 17h9" stroke="#4a5560" /></Ic></Cell>
      <Cell c="ml-[8px] h-[23px] w-[23px] rounded-l-[4px] bg-[#1a2434]"><MagnetIcon /></Cell>
      <Cell c="h-[23px] w-[40px] gap-[3px] rounded-r-[4px] bg-[#07090d]">
        <Ic><path d="M6 8v11M14 1v18M8 5.500h11M1 14h18" stroke="#8f8f8f" /><rect x="1" y="1" width="7" height="7" fill="#eee" stroke="none" /></Ic><Chev />
      </Cell>
      <Cell c="ml-[8px] h-[23px] w-[23px] rounded-l-[4px] bg-[#264a78]"><OverlayIcon /></Cell>
      <Cell c="h-[23px] w-[25px] rounded-r-[4px] bg-[#07090d]"><Chev /></Cell>
      <Cell c="ml-[22px] h-[23px] w-[22px] rounded-[3px] bg-[#1a2434]"><FilterIcon /></Cell>
      <Cell c="ml-[10px] h-[23px] w-[23px] rounded-[3px] bg-[#10161e]"><FaCog className="size-[18px] text-[#ececec]" /></Cell>
    </div>
  );
}

/* ---------- page ---------- */

function FileCard({ name, green }: { name: string; green: boolean }) {
  return (
    <>
      <div className="flex h-[47px] pt-[14px]">
        <div className="h-[32px] bg-[#1c2027] pr-[10px] font-['Open_Sans'] text-[18.500px] leading-[32px] tracking-[-0.330px] whitespace-nowrap text-[#5d6f84]">{name}</div>
      </div>
      <div className="h-[1273px] rounded-[8px] border-2 border-[#828282] bg-[#0b1015] pt-[4px] pl-[6px]">
        <Viewport green={green} />
        <div className="mt-[5px] w-[1575px] overflow-hidden rounded-[6px]">
          <NodeBar />
          <Canvas green={green} />
        </div>
      </div>
    </>
  );
}

export default function App() {
  return (
    <div className="relative h-[1455px] w-[3209px] overflow-hidden bg-[#1c2027] font-[Inter,'Noto_Sans_CJK_SC',sans-serif]">
      <svg className="absolute inset-0 h-full w-full">
        <defs>
          <pattern id="page" x="15.200" y="4.800" width="21.200" height="21.220" patternUnits="userSpaceOnUse">
            <circle cx="1" cy="1" r="1" fill="#35383c" />
          </pattern>
        </defs>
        <rect width="3209" height="1455" fill="url(#page)" />
      </svg>
      <div className="relative flex pl-[16px]">
        <div className="w-[1589.500px]">
          <FileCard name="Pasted image 20240927214258.png" green={false} />
          <div className="ml-[442px] h-[91px] w-[706px] rounded-[8px] border-2 border-[#808080] bg-[#1c2027] px-[25px] pt-[18px] text-[28.450px] leading-[35px] font-bold text-[#dadada]">
            这是具有两个材质的棱角球
          </div>
        </div>
        <div className="w-[1589.500px]">
          <FileCard name="Pasted image 20240927214336.png" green />
          <div className="relative mt-[-2px] ml-[515.500px] h-[129px] w-[588px] rounded-[8px] border-2 border-[#808080] bg-[#1c2027] px-[25px] pt-[18px] text-[28.450px] leading-[35px] font-bold text-[#dadada]">
            通过替换材质节点将红色材质替换成绿色材质
          </div>
        </div>
      </div>
    </div>
  );
}
